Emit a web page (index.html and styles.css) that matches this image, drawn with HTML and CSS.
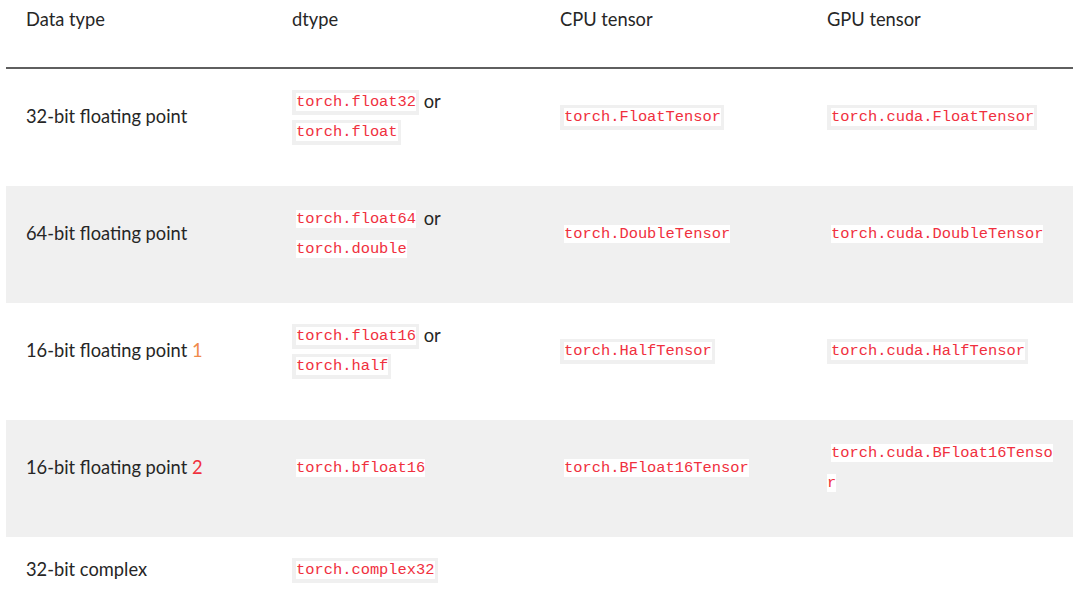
FILE: index.html
```html
<!DOCTYPE html>
<html>
<head>
<meta charset="utf-8">
<link rel="stylesheet" href="styles.css">
</head>
<body>
<table class="dtable">
  <colgroup>
    <col class="c1"><col class="c2"><col class="c3"><col class="c4">
  </colgroup>
  <thead>
    <tr>
      <th><p>Data type</p></th>
      <th><p>dtype</p></th>
      <th><p>CPU tensor</p></th>
      <th><p>GPU tensor</p></th>
    </tr>
  </thead>
  <tbody>
    <tr>
      <td><p>32-bit floating point</p></td>
      <td><p><code><span>torch.float32</span></code> or <code><span>torch.float</span></code></p></td>
      <td><p><code><span>torch.FloatTensor</span></code></p></td>
      <td><p><code><span>torch.cuda.FloatTensor</span></code></p></td>
    </tr>
    <tr class="alt">
      <td><p>64-bit floating point</p></td>
      <td><p><code><span>torch.float64</span></code> or <code><span>torch.double</span></code></p></td>
      <td><p><code><span>torch.DoubleTensor</span></code></p></td>
      <td><p><code><span>torch.cuda.DoubleTensor</span></code></p></td>
    </tr>
    <tr>
      <td><p>16-bit floating point <a class="fn visited">1</a></p></td>
      <td><p><code><span>torch.float16</span></code> or <code><span>torch.half</span></code></p></td>
      <td><p><code><span>torch.HalfTensor</span></code></p></td>
      <td><p><code><span>torch.cuda.HalfTensor</span></code></p></td>
    </tr>
    <tr class="alt">
      <td><p>16-bit floating point <a class="fn">2</a></p></td>
      <td><p><code><span>torch.bfloat16</span></code></p></td>
      <td><p><code><span>torch.BFloat16Tensor</span></code></p></td>
      <td><p><code><span>torch.cuda.BFloat16Tensor</span></code></p></td>
    </tr>
    <tr>
      <td><p>32-bit complex</p></td>
      <td><p><code><span>torch.complex32</span></code></p></td>
      <td><p></p></td>
      <td><p></p></td>
    </tr>
  </tbody>
</table>
</body>
</html>
```

FILE: styles.css
```css
html, body {
  margin: 0;
  padding: 0;
  background: #ffffff;
}
body {
  padding: 0 12px 0 6px;
  font-family: Lato, "Open Sans", sans-serif;
  font-size: 18.3px;
  color: #262626;
  overflow: hidden;
}
.dtable {
  width: 1067px;
  border-collapse: collapse;
  table-layout: fixed;
}
.c1 { width: 266px; }
.c2 { width: 268px; }
.c3 { width: 267px; }
.c4 { width: 266px; }
.dtable th {
  text-align: left;
  font-weight: 400;
  padding: 4px 20px 9px 20px;
  border-bottom: 2px solid #5f5f5f;
  vertical-align: top;
}
.dtable td {
  padding: 17px 20px 16px 20px;
  vertical-align: middle;
}
.dtable p {
  margin: 0 0 24px 0;
  line-height: 30px;
  overflow-wrap: anywhere;
}
.dtable tr.alt td {
  background: #f0f0f0;
}
code {
  font-family: "Liberation Mono", "DejaVu Sans Mono", monospace;
  font-size: 15.4px;
  line-height: 15px;
  color: #f0303e;
  background: #f0f0f0;
  padding: 3px 3px 4px 4px;
  vertical-align: 2px;
}
code span {
  background: #ffffff;
}
.fn {
  color: #f0303e;
}
.fn.visited {
  color: #f08a4b;
}
```
